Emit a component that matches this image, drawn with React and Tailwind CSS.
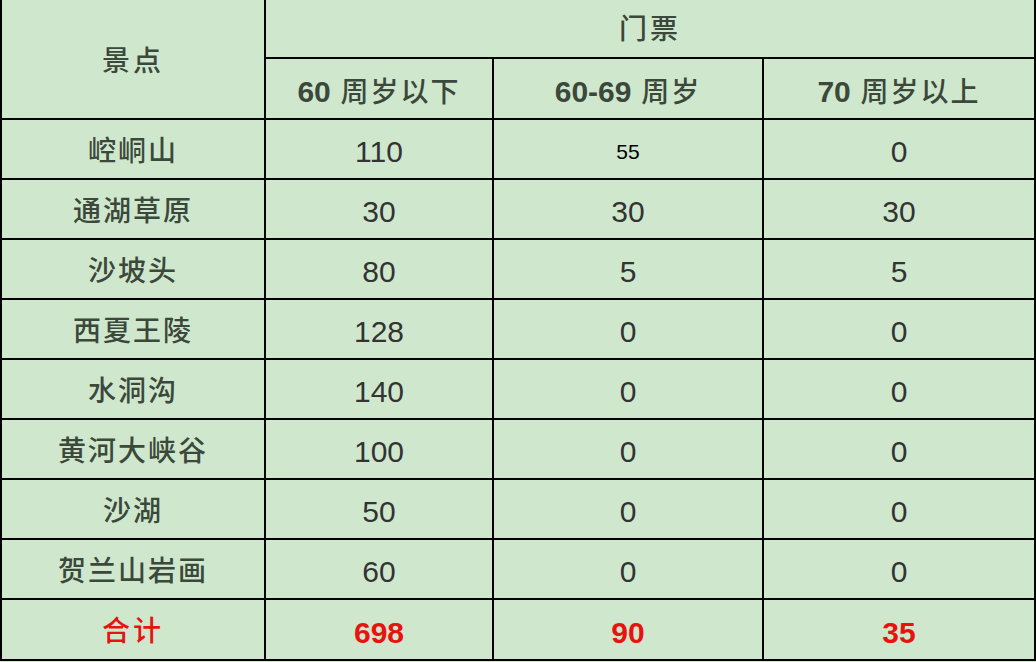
const rows = [
  ['崆峒山', '110', '55', '0'],
  ['通湖草原', '30', '30', '30'],
  ['沙坡头', '80', '5', '5'],
  ['西夏王陵', '128', '0', '0'],
  ['水洞沟', '140', '0', '0'],
  ['黄河大峡谷', '100', '0', '0'],
  ['沙湖', '50', '0', '0'],
  ['贺兰山岩画', '60', '0', '0'],
];

const cell = 'border-2 border-black text-center align-middle p-0 pt-[5px]';

export default function App() {
  return (
    <div className="w-[1036px] h-[662px] overflow-hidden bg-[#cfe8cd] font-['Liberation_Sans','Noto_Sans_CJK_SC',sans-serif] text-[#3b483b]">
      <table className="w-[1034px] table-fixed border-collapse text-[28px]">
        <colgroup>
          <col className="w-[264px]" />
          <col className="w-[228px]" />
          <col className="w-[270px]" />
          <col className="w-[272px]" />
        </colgroup>
        <thead>
          <tr className="h-[58px]">
            <th rowSpan={2} className={`${cell} border-t-0 font-medium tracking-[3px]`}>
              景点
            </th>
            <th colSpan={3} className={`${cell} border-t-0 pt-0 pb-[3px] font-medium tracking-[3px]`}>
              门票
            </th>
          </tr>
          <tr className="h-[61px]">
            <th className={`${cell} font-medium tracking-[2px]`}>
              <span className="font-bold text-[30px] tracking-normal">60</span> 周岁以下
            </th>
            <th className={`${cell} font-medium tracking-[2px]`}>
              <span className="font-bold text-[30px] tracking-normal">60-69</span> 周岁
            </th>
            <th className={`${cell} font-medium tracking-[2px]`}>
              <span className="font-bold text-[30px] tracking-normal">70</span> 周岁以上
            </th>
          </tr>
        </thead>
        <tbody>
          {rows.map((r) => (
            <tr key={r[0]} className="h-[60px]">
              <td className={`${cell} font-medium tracking-[2px]`}>{r[0]}</td>
              <td className={`${cell} text-[30px] text-[#333]`}>{r[1]}</td>
              <td className={`${cell} ${r[2] === '55' ? 'text-[21px] text-black' : 'text-[30px] text-[#333]'}`}>
                {r[2]}
              </td>
              <td className={`${cell} text-[30px] text-[#333]`}>{r[3]}</td>
            </tr>
          ))}
          <tr className="h-[61px] text-[#e8120f]">
            <td className={`${cell} font-medium tracking-[3px]`}>合计</td>
            <td className={`${cell} text-[30px] font-bold`}>698</td>
            <td className={`${cell} text-[30px] font-bold`}>90</td>
            <td className={`${cell} text-[30px] font-bold`}>35</td>
          </tr>
        </tbody>
      </table>
    </div>
  );
}
